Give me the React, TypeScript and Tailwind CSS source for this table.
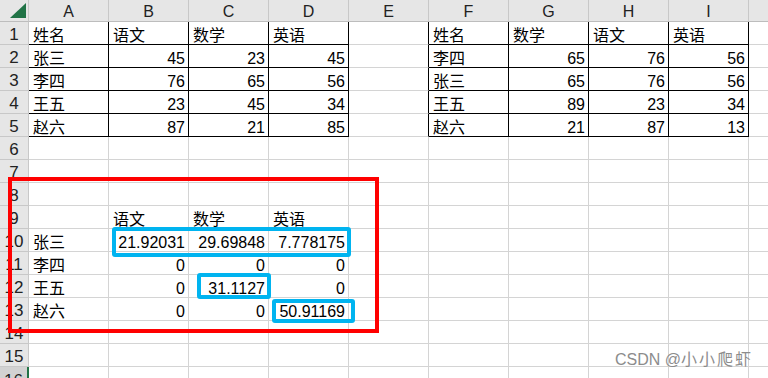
import React from 'react';

const COLS = ['A', 'B', 'C', 'D', 'E', 'F', 'G', 'H', 'I', 'J'];

type Cell = string | number;
const data: Record<number, Record<string, Cell>> = {
  1: { A: '姓名', B: '语文', C: '数学', D: '英语', F: '姓名', G: '数学', H: '语文', I: '英语' },
  2: { A: '张三', B: 45, C: 23, D: 45, F: '李四', G: 65, H: 76, I: 56 },
  3: { A: '李四', B: 76, C: 65, D: 56, F: '张三', G: 65, H: 76, I: 56 },
  4: { A: '王五', B: 23, C: 45, D: 34, F: '王五', G: 89, H: 23, I: 34 },
  5: { A: '赵六', B: 87, C: 21, D: 85, F: '赵六', G: 21, H: 87, I: 13 },
  9: { B: '语文', C: '数学', D: '英语' },
  10: { A: '张三', B: '#21.92031', C: '#29.69848', D: '#7.778175' },
  11: { A: '李四', B: 0, C: 0, D: 0 },
  12: { A: '王五', B: 0, C: '#31.1127', D: 0 },
  13: { A: '赵六', B: 0, C: 0, D: '#50.91169' },
};

const inTable = (r: number, c: string) =>
  r >= 1 && r <= 5 && ['A', 'B', 'C', 'D', 'F', 'G', 'H', 'I'].includes(c);

function DataCell({ r, c }: { r: number; c: string }) {
  const raw = data[r]?.[c];
  let text = '';
  let num = false;
  if (typeof raw === 'number') {
    text = String(raw);
    num = true;
  } else if (typeof raw === 'string') {
    if (raw.startsWith('#')) {
      text = raw.slice(1);
      num = true;
    } else text = raw;
  }
  const table = inTable(r, c);
  const eEdge = c === 'E' && r >= 1 && r <= 5;
  let cls = 'flex items-end overflow-hidden whitespace-nowrap border-r border-b ';
  if (table) cls += 'border-r-black border-b-black ';
  else if (eEdge) cls += 'border-r-black border-b-[#d4d4d4] ';
  else cls += 'border-r-[#d4d4d4] border-b-[#d4d4d4] ';
  cls += num ? 'justify-end pr-[3px]' : 'justify-start pl-[4px]';
  return (
    <div className={cls}>
      <span className="text-[16px] leading-[16px] text-black">{text}</span>
    </div>
  );
}

export default function App() {
  const rows = Array.from({ length: 16 }, (_, i) => i + 1);
  return (
    <div className="relative w-[768px] h-[378px] overflow-hidden bg-white font-['Liberation_Sans','Noto_Sans_CJK_SC',sans-serif]">
      <div className="grid grid-cols-[29px_repeat(10,80px)] grid-rows-[22px_repeat(16,23px)]">
        <div className="relative bg-[#e6e6e6] border-r border-b border-r-[#c8c8c8] border-b-[#bdbdbd]">
          <svg className="absolute left-[10px] top-[3px]" width="16" height="15" viewBox="0 0 16 15">
            <polygon points="16,0 16,15 0,15" fill="#217346" />
          </svg>
        </div>
        {COLS.map((c) => (
          <div
            key={c}
            className="flex items-end justify-center pb-[1px] bg-[#e6e6e6] border-r border-b border-r-[#c8c8c8] border-b-[#bdbdbd] text-[16px] leading-[16px] text-[#222]"
          >
            {c === 'J' ? '' : c}
          </div>
        ))}
        {rows.map((r) => (
          <React.Fragment key={r}>
            {r === 16 ? (
              <div className="flex items-end justify-center bg-[#d2d2d2] border-r-2 border-b border-r-[#217346] border-b-[#c8c8c8] text-[17px] leading-[17px] text-[#222]">
                {r}
              </div>
            ) : (
              <div className="flex items-end justify-center pb-[1px] bg-[#e6e6e6] border-r border-b border-r-[#c8c8c8] border-b-[#c8c8c8] text-[17px] leading-[17px] text-[#222]">
                {r}
              </div>
            )}
            {COLS.map((c) => (
              <DataCell key={c} r={r} c={c} />
            ))}
          </React.Fragment>
        ))}
      </div>

      <div className="absolute left-[8px] top-[177px] w-[371px] h-[156px] border-4 border-[#ff0000]" />
      <div className="absolute left-[112px] top-[227px] w-[239px] h-[30px] border-4 border-[#00b4f0] rounded-[3px]" />
      <div className="absolute left-[197px] top-[273px] w-[74px] h-[26px] border-4 border-[#00b4f0] rounded-[3px]" />
      <div className="absolute left-[272px] top-[299px] w-[83px] h-[24px] border-4 border-[#00b4f0] rounded-[3px]" />

      <div className="absolute left-[615px] top-[350px] text-[16px] leading-[20px] text-[#8c8c8c] whitespace-nowrap">
        CSDN @<span className="tracking-[2px]">小小爬虾</span>
      </div>
    </div>
  );
}
